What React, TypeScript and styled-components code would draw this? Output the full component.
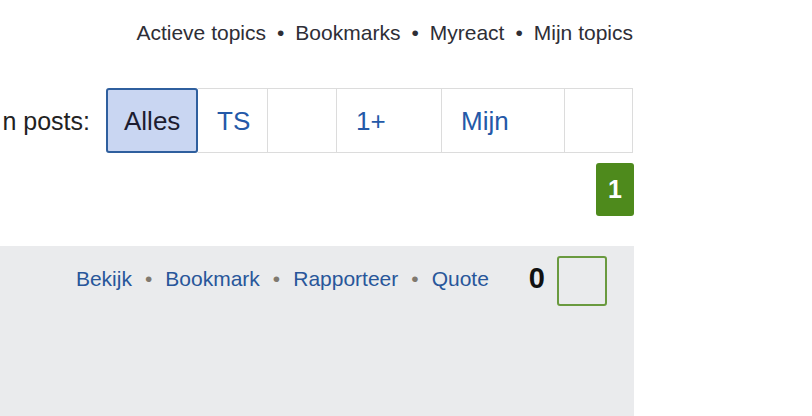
import React from 'react';
import styled, { createGlobalStyle, css } from 'styled-components';

const GlobalStyle = createGlobalStyle`
    body {
        margin: 0;
        background: #ffffff;
        font-family: "Liberation Sans", Arial, sans-serif;
    }
`;

const Page = styled.div`
    width: 634px;
    display: flex;
    flex-direction: column;
`;

const TopNav = styled.nav`
    display: flex;
    justify-content: flex-end;
    align-items: center;
    padding: 21px 1px 0 0;
    font-size: 21px;
    line-height: 24px;
    color: #2e2e36;
    white-space: nowrap;
`;

const NavLink = styled.a`
    color: inherit;
    text-decoration: none;
`;

const Dot = styled.span<{ $gap: number }>`
    margin: 0 ${({ $gap }) => $gap}px;
`;

const FilterRow = styled.div`
    display: flex;
    justify-content: flex-end;
    align-items: center;
    margin-top: 43px;
    padding-right: 1px;
`;

const FilterLabel = styled.span`
    flex-shrink: 0;
    white-space: nowrap;
    font-size: 25px;
    line-height: 30px;
    color: #222222;
    margin-right: 16px;
`;

const FilterGroup = styled.div`
    display: flex;
    flex-shrink: 0;
`;

interface CellProps {
    $w: number,
    $active?: boolean
}

const Cell = styled.div<CellProps>`
    box-sizing: border-box;
    width: ${({ $w }) => $w}px;
    height: 65px;
    display: flex;
    align-items: center;
    padding-left: 19px;
    font-size: 26px;
    line-height: 28px;
    color: #2459a8;
    border: 1px solid #dcdcdc;
    border-left: none;
    background: #ffffff;

    ${({ $active }) => $active && css`
        padding-left: 16px;
        border: 2px solid #2f5f9e;
        border-radius: 3px;
        background: #c9d6f2;
        color: #1c1c30;
    `}
`;

const PagerRow = styled.div`
    display: flex;
    justify-content: flex-end;
    margin-top: 10px;
`;

const PageBadge = styled.span`
    width: 38px;
    height: 53px;
    display: flex;
    align-items: center;
    justify-content: center;
    background: #4e8a1c;
    border-radius: 3px;
    color: #ffffff;
    font-size: 25px;
    font-weight: bold;
`;

const PostBar = styled.div`
    margin-top: 30px;
    min-height: 160px;
    background: #eaebed;
    display: flex;
    justify-content: flex-end;
    align-items: flex-start;
    padding: 10px 27px 0 0;
`;

const PostActions = styled.div`
    display: flex;
    margin-top: 11px;
    margin-right: 40px;
    font-size: 21px;
    line-height: 24px;
    color: #28569a;
    white-space: nowrap;
`;

const ActionDot = styled(Dot)`
    color: #80796f;
`;

const Score = styled.span`
    margin-top: 7px;
    margin-right: 12px;
    font-size: 29px;
    line-height: 30px;
    font-weight: bold;
    color: #111111;
`;

const VoteBox = styled.div`
    box-sizing: border-box;
    width: 50px;
    height: 50px;
    border: 2px solid #6a9a3f;
    border-radius: 3px;
`;

const topLinks = ['Actieve topics', 'Bookmarks', 'Myreact', 'Mijn topics'];
const filters = [
    { label: 'Alles', w: 92, active: true },
    { label: 'TS', w: 70 },
    { label: '', w: 69 },
    { label: '1+', w: 105 },
    { label: 'Mijn', w: 123 },
    { label: '', w: 68 },
];
const actions = ['Bekijk', 'Bookmark', 'Rapporteer', 'Quote'];

const App: React.FC = () => {
    return (
        <Page>
            <GlobalStyle />
            <TopNav>
                {topLinks.map((link, index) => (
                    <React.Fragment key={link}>
                        {index > 0 && <Dot $gap={11}>•</Dot>}
                        <NavLink href="#">{link}</NavLink>
                    </React.Fragment>
                ))}
            </TopNav>
            <FilterRow>
                <FilterLabel>n posts:</FilterLabel>
                <FilterGroup>
                    {filters.map((f, index) => (
                        <Cell key={index} $w={f.w} $active={f.active}>{f.label}</Cell>
                    ))}
                </FilterGroup>
            </FilterRow>
            <PagerRow>
                <PageBadge>1</PageBadge>
            </PagerRow>
            <PostBar>
                <PostActions>
                    {actions.map((action, index) => (
                        <React.Fragment key={action}>
                            {index > 0 && <ActionDot $gap={13}>•</ActionDot>}
                            <NavLink href="#">{action}</NavLink>
                        </React.Fragment>
                    ))}
                </PostActions>
                <Score>0</Score>
                <VoteBox />
            </PostBar>
        </Page>
    );
};

export default App;
